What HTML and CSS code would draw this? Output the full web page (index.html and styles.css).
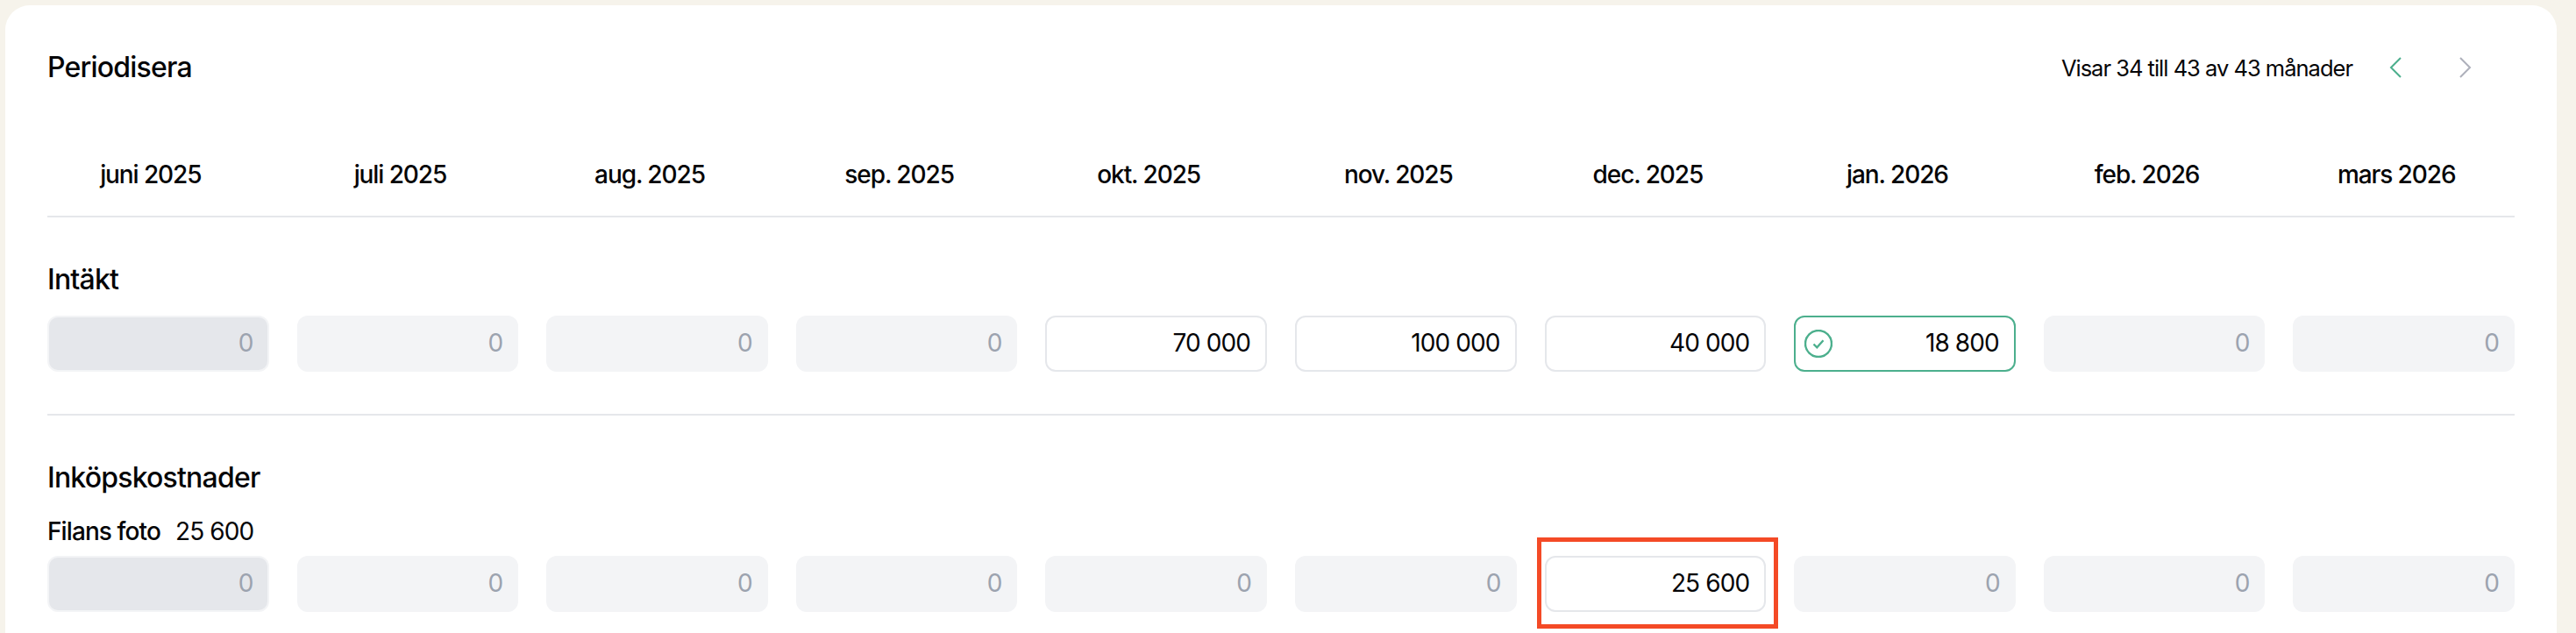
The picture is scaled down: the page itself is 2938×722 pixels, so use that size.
FILE: index.html
```html
<!DOCTYPE html>
<html lang="sv">
<head>
<meta charset="utf-8">
<title>Periodisera</title>
<link rel="stylesheet" href="styles.css">
</head>
<body>
<main class="card">
  <header class="top">
    <h1 class="title">Periodisera</h1>
    <div class="pager">
      <span class="pager-text">Visar 34 till 43 av 43 månader</span>
      <svg class="chev" viewBox="0 0 14 24"><path class="green" d="M13 1 2 12l11 11"/></svg>
      <svg class="chev" viewBox="0 0 14 24"><path class="grey" d="m1 1 11 11L1 23"/></svg>
    </div>
  </header>
  <div class="grid months">
    <div class="month">juni 2025</div><div class="month">juli 2025</div><div class="month">aug. 2025</div><div class="month">sep. 2025</div><div class="month">okt. 2025</div><div class="month">nov. 2025</div><div class="month">dec. 2025</div><div class="month">jan. 2026</div><div class="month">feb. 2026</div><div class="month">mars 2026</div>
  </div>
  <section class="section first">
    <h2 class="heading">Intäkt</h2>
    <div class="grid">
      <div class="field current">0</div>
      <div class="field empty">0</div>
      <div class="field empty">0</div>
      <div class="field empty">0</div>
      <div class="field filled">70 000</div>
      <div class="field filled">100 000</div>
      <div class="field filled">40 000</div>
      <div class="field filled ok">
        <svg class="check" viewBox="0 0 32 32"><circle cx="16" cy="16" r="15"/><path d="m10.5 16.5 3.8 3.8 7.2-8"/></svg>
        18 800
      </div>
      <div class="field empty">0</div>
      <div class="field empty">0</div>
    </div>
  </section>
  <section class="section second">
    <h2 class="heading">Inköpskostnader</h2>
    <p class="sub"><strong class="sub-name">Filans foto</strong><span>25 600</span></p>
    <div class="grid">
      <div class="field current">0</div>
      <div class="field empty">0</div>
      <div class="field empty">0</div>
      <div class="field empty">0</div>
      <div class="field empty">0</div>
      <div class="field empty">0</div>
      <div class="field filled highlighted">25 600<span class="marker"></span></div>
      <div class="field empty">0</div>
      <div class="field empty">0</div>
      <div class="field empty">0</div>
    </div>
  </section>
</main>
</body>
</html>
```

FILE: styles.css
```css
* { box-sizing: border-box; }
html, body { margin: 0; height: 100%; overflow: hidden; }
body {
  background: #f6f3eb;
  padding: 6px 22px 0 6px;
  font-family: "Inter", "Liberation Sans", sans-serif;
  color: #050507;
}
.card {
  background: #fff;
  border-radius: 28px 28px 0 0;
  height: 716px;
  padding: 0 48px;
}
.top {
  height: 140px;
  display: flex;
  justify-content: space-between;
  align-items: center;
}
.title { margin: 0; font-size: 32px; font-weight: 500; letter-spacing: -0.8px; }
.pager { display: flex; align-items: center; margin-right: 49px; padding-top: 2px; }
.pager-text { font-size: 25.5px; letter-spacing: -1px; margin-right: 42px; }
.chev { width: 14px; height: 24px; margin-right: 66px; fill: none; stroke-width: 2; }
.chev:last-child { margin-right: 0; }
.green { stroke: #4caf8d; }
.grey { stroke: #aeb0bb; }
.grid {
  display: grid;
  grid-template-columns: repeat(10, 1fr);
  column-gap: 32px;
}
.months { height: 102px; padding-top: 6px; border-bottom: 2px solid #e5e7eb; align-items: center; }
.month {
  font-size: 28px;
  font-weight: 500;
  letter-spacing: -1.1px;
  text-align: center;
  padding-right: 17px;
}
.section.first { height: 226px; border-bottom: 2px solid #e5e7eb; padding-top: 53px; }
.section.second { padding-top: 53px; }
.heading { margin: 0; font-size: 32px; font-weight: 500; letter-spacing: -0.8px; line-height: 36px; }
.first .heading { margin-bottom: 23px; }
.second .heading { margin-bottom: 27px; }
.sub { margin: 0 0 12px; font-size: 28px; line-height: 32px; letter-spacing: -0.9px; display: flex; gap: 17px; }
.sub-name { font-weight: 500; }
.field {
  position: relative;
  height: 64px;
  border-radius: 12px;
  border: 2px solid transparent;
  padding: 0 17px 3px;
  display: flex;
  align-items: center;
  justify-content: flex-end;
  font-size: 28px;
  letter-spacing: -0.9px;
}
.empty { background: #f3f4f6; color: #9ca3af; padding-right: 16px; }
.current { background: #e5e7eb; border-color: #f3f4f6; color: #9ca3af; padding-right: 16px; }
.filled { background: #fff; border-color: #e5e7eb; color: #050507; }
.ok { border-color: #4caf8d; }
.check {
  position: absolute;
  left: 10px;
  top: 14px;
  width: 32px;
  height: 32px;
  fill: none;
  stroke: #4caf8d;
  stroke-width: 2.4;
}
.marker {
  position: absolute;
  left: -11px;
  right: -16px;
  top: -23px;
  bottom: -21px;
  border: 5px solid #f44a26;
}
```
